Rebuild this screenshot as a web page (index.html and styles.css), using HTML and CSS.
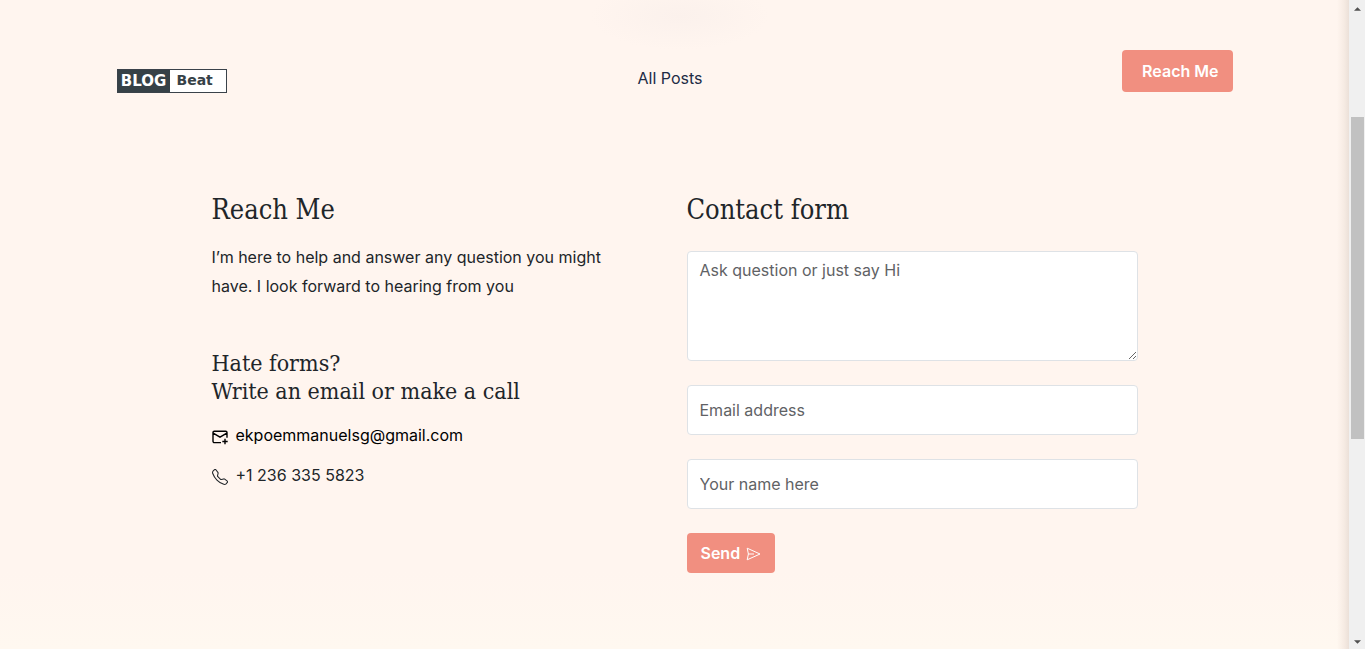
FILE: index.html
```html
<!DOCTYPE html>
<html lang="en">
<head>
<meta charset="utf-8">
<meta name="viewport" content="width=device-width, initial-scale=1">
<title>Blog Beat – Reach Me</title>
<link rel="stylesheet" href="styles.css">
</head>
<body>
<div class="window">
  <div class="page">
    <header class="site-header">
      <a class="logo" href="#"><span class="logo-dark">BLOG</span><span class="logo-light">Beat</span></a>
      <nav class="nav"><a href="#">All Posts</a></nav>
      <a class="btn btn-reach" href="#contact">Reach Me</a>
    </header>
    <main class="contact" id="contact">
      <section class="info">
        <h2 class="title">Reach Me</h2>
        <p class="lead">I’m here to help and answer any question you might have. I look forward to hearing from you</p>
        <h3 class="subtitle">Hate forms?<br>Write an email or make a call</h3>
        <a class="line line-mail" href="mailto:ekpoemmanuelsg@gmail.com">
          <svg class="icon" viewBox="0 0 16 16" fill="none" stroke="currentColor" stroke-width="1.4" aria-hidden="true"><path d="M9 13.6H2.3A1.3 1.3 0 0 1 1 12.3V3.5a1.3 1.3 0 0 1 1.3-1.3h11.4A1.3 1.3 0 0 1 15 3.5v5.2M1.2 4.2 8 8.2l6.8-4M13 9.8v5.4M10.3 12.5h5.4"/></svg>
          <span>ekpoemmanuelsg@gmail.com</span>
        </a>
        <p class="line">
          <svg class="icon" viewBox="0 0 16 16" fill="currentColor" aria-hidden="true"><path d="M3.654 1.328a.678.678 0 0 0-1.015-.063L1.605 2.3c-.483.484-.661 1.169-.45 1.77a17.568 17.568 0 0 0 4.168 6.608 17.569 17.569 0 0 0 6.608 4.168c.601.211 1.286.033 1.77-.45l1.034-1.034a.678.678 0 0 0-.063-1.015l-2.307-1.794a.678.678 0 0 0-.58-.122l-2.19.547a1.745 1.745 0 0 1-1.657-.459L5.482 8.062a1.745 1.745 0 0 1-.46-1.657l.548-2.19a.678.678 0 0 0-.122-.58L3.654 1.328zM1.884.511a1.745 1.745 0 0 1 2.612.163L6.29 2.98c.329.423.445.974.315 1.494l-.547 2.19a.678.678 0 0 0 .178.643l2.457 2.457a.678.678 0 0 0 .644.178l2.189-.547a1.745 1.745 0 0 1 1.494.315l2.306 1.794c.829.645.905 1.87.163 2.611l-1.034 1.034c-.74.74-1.846 1.065-2.877.702a18.634 18.634 0 0 1-7.01-4.42 18.634 18.634 0 0 1-4.42-7.009c-.362-1.03-.037-2.137.703-2.877L1.885.511z"/></svg>
          <span>+1 236 335 5823</span>
        </p>
      </section>
      <form class="form">
        <h2 class="title">Contact form</h2>
        <textarea class="field field-area" aria-label="Question" placeholder="Ask question or just say Hi"></textarea>
        <input class="field" type="email" aria-label="Email address" placeholder="Email address">
        <input class="field" type="text" aria-label="Your name" placeholder="Your name here">
        <button class="btn btn-send" type="button">Send
          <svg class="icon-send" viewBox="0 0 16 16" fill="none" stroke="currentColor" stroke-linejoin="round" aria-hidden="true"><path d="M2.2 2.2 15 8 2.2 13.8 3.4 8zM3.4 8H9"/></svg>
        </button>
      </form>
    </main>
  </div>
  <div class="scrollbar" aria-hidden="true">
    <svg class="arrow" viewBox="0 0 8 4"><path d="M4 0 8 4H0z"/></svg>
    <div class="track"><div class="thumb"></div></div>
    <svg class="arrow" viewBox="0 0 8 4"><path d="M0 0h8L4 4z"/></svg>
  </div>
</div>
</body>
</html>
```
FILE: styles.css
```css
* { box-sizing: border-box; }

body {
  margin: 0;
  color: #212529;
  font-family: Inter, "Noto Sans", sans-serif;
  font-size: 16px;
  line-height: 24px;
}

h2, h3, p { margin: 0; }
a { color: inherit; text-decoration: none; }

.window {
  display: grid;
  grid-template-columns: 1fr 16px;
  height: 100vh;
}

.page {
  overflow: hidden;
  padding: 50px 24px 0;
  background:
    linear-gradient(to left, #ebe0d8, #f6ebe3 5px, rgba(255, 245, 239, 0) 12px),
    radial-gradient(ellipse 90px 34px at 680px 16px, #fbf1ec, rgba(255, 245, 239, 0)),
    linear-gradient(#fff5ef 88%, #fff8f0);
}

.site-header {
  display: grid;
  grid-template-columns: 1fr auto 1fr;
  align-items: start;
  max-width: 1116px;
  margin: 0 auto;
}

.logo {
  display: flex;
  justify-self: start;
  width: 110px;
  height: 24px;
  margin-top: 19px;
  border: 1px solid #3a424a;
  background: #fff;
  color: #364147;
  font: 900 15px/22px "DejaVu Sans", sans-serif;
}

.logo-dark {
  width: 52px;
  background: #364147;
  color: #fff;
  text-align: center;
}

.logo-light { padding-left: 7px; font-size: 14px; line-height: 21px; }

.nav { padding: 16px 9px 0 0; color: #212b45; }

.btn {
  border: 0;
  border-radius: 4px;
  background: #f18f80;
  color: #fff;
  font: 600 16px/24px Inter, "Noto Sans", sans-serif;
}

.btn-reach { justify-self: end; padding: 9px 14px 9px 20px; }

.contact {
  display: grid;
  grid-template-columns: 1fr 1fr;
  gap: 24px;
  max-width: 926px;
  margin: 100px auto 0;
}

.title, .subtitle {
  font-family: "DejaVu Serif Condensed", "DejaVu Serif", serif;
  font-stretch: condensed;
  font-weight: 400;
}

.title { font-size: 27px; line-height: 34px; }
.lead { margin-top: 16px; padding-right: 36px; line-height: 29px; }
.subtitle { margin-top: 48px; font-size: 23px; line-height: 28px; }

.line {
  display: flex;
  align-items: center;
  gap: 8px;
  margin-top: 16px;
}

.line-mail { margin-top: 18px; color: #000; }
.icon { width: 16px; height: 16px; margin-top: 3px; }

.form {
  display: flex;
  flex-direction: column;
  align-items: flex-start;
  gap: 24px;
}

.field {
  width: 100%;
  height: 50px;
  padding: 6px 12px;
  border: 1px solid #dee2e6;
  border-radius: 4px;
  background: #fff;
  color: #212529;
  font: 16px/24px Inter, "Noto Sans", sans-serif;
}

.field::placeholder { color: #5f6265; opacity: 1; }
.field-area { height: 110px; resize: vertical; }

.btn-send {
  display: flex;
  align-items: center;
  gap: 5px;
  height: 40px;
  padding: 0 14px;
}

.icon-send { width: 16px; height: 16px; margin-top: 2px; }

.scrollbar {
  display: flex;
  flex-direction: column;
  align-items: center;
  padding: 7px 1px 5px 2px;
  background: #f0f0f0;
}

.arrow { width: 7px; height: 4px; fill: #505050; }
.track { flex: 1; width: 100%; padding-top: 106px; }
.thumb { height: 322px; background: #c1c1c1; }
```
